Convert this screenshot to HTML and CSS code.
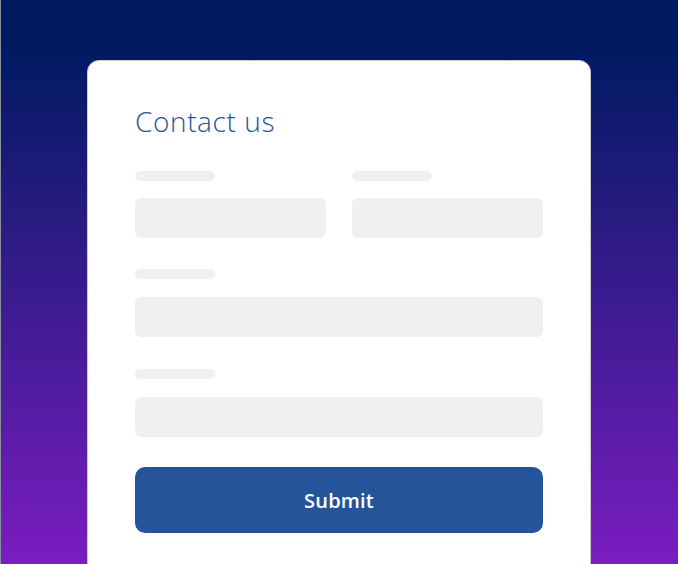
FILE: index.html
```html
<!DOCTYPE html>
<html lang="en">
<head>
  <meta charset="UTF-8" />
  <meta name="viewport" content="width=device-width, initial-scale=1.0" />
  <title>Contact us</title>
  <link rel="stylesheet" href="styles.css">
</head>
<body>
  <div class="card">
    <h2 class="title">Contact us</h2>

    <form class="form">
      <div class="row">
        <div class="field">
          <span class="label-bar"></span>
          <div class="input-box"></div>
        </div>
        <div class="field">
          <span class="label-bar"></span>
          <div class="input-box"></div>
        </div>
      </div>

      <div class="field">
        <span class="label-bar"></span>
        <div class="input-box"></div>
      </div>

      <div class="field">
        <span class="label-bar"></span>
        <div class="input-box"></div>
      </div>

      <button type="button" class="submit-btn">Submit</button>
    </form>
  </div>
</body>
</html>
```

FILE: styles.css
```css
* {
  margin: 0;
  padding: 0;
  box-sizing: border-box;
}

html, body {
  height: 100%;
}

body {
  font-family: 'Open Sans', 'Noto Sans', sans-serif;
  background: linear-gradient(180deg, #001a62 0px, #001a62 50px, #7a1dc0 100%);
  box-shadow: inset 1px 0 0 #8a8fa0;
  overflow: hidden;
}

.card {
  width: 504px;
  margin: 60px auto 0;
  background: #ffffff;
  border: 1px solid #c9cbd3;
  border-radius: 12px;
  padding: 44px 47px 40px;
}

.title {
  font-size: 28px;
  line-height: 32px;
  font-weight: 300;
  color: #2a549a;
  letter-spacing: 0.6px;
  margin-bottom: 34px;
}

.form {
  display: flex;
  flex-direction: column;
}

.row {
  display: grid;
  grid-template-columns: 1fr 1fr;
  gap: 26px;
  margin-bottom: 31px;
}

.field {
  display: flex;
  flex-direction: column;
  gap: 17px;
}

.form > .field {
  gap: 18px;
  margin-bottom: 32px;
}

.form > .field:last-of-type {
  margin-bottom: 30px;
}

.label-bar {
  display: block;
  width: 80px;
  height: 10px;
  border-radius: 5px;
  background: #f0f0f0;
}

.input-box {
  height: 40px;
  border-radius: 6px;
  background: #f0f0f0;
}

.submit-btn {
  height: 66px;
  border: none;
  border-radius: 10px;
  background: #25549a;
  color: #ffffff;
  font-family: inherit;
  font-size: 20px;
  font-weight: 600;
  letter-spacing: 0.2px;
}
```
